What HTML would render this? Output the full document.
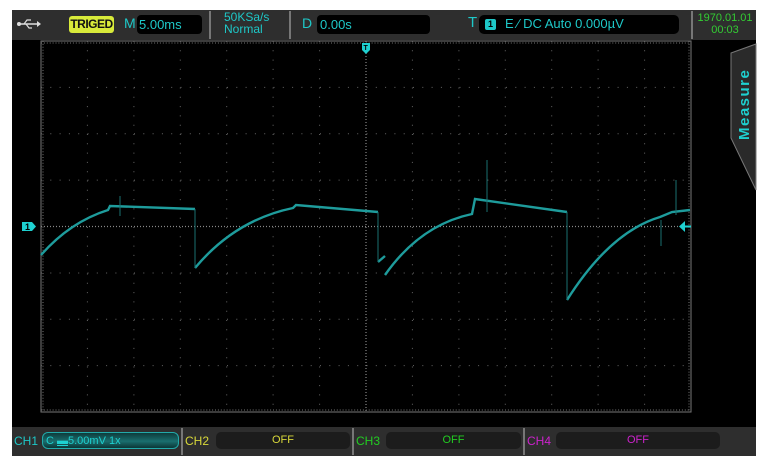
<!DOCTYPE html>
<html><head><style>
body{margin:0;background:#fff;width:772px;height:469px;overflow:hidden;font-family:"Liberation Sans",sans-serif}
.a{position:absolute}
</style></head><body>
<div class="a" style="left:12px;top:10px;width:744px;height:446px;background:#000"></div>
<div class="a" style="left:12px;top:10px;width:744px;height:30px;background:#2e2e2e"></div>
<div class="a" style="left:12px;top:427px;width:744px;height:29px;background:#2e2e2e"></div>
<svg class="a" style="left:0;top:0" width="772" height="469">
<g fill="#ddd" stroke="#ddd">
<circle cx="19" cy="24" r="2" stroke="none"/>
<line x1="19" y1="24" x2="37" y2="24" stroke-width="1.5"/>
<polygon points="37,21 41,24 37,27" stroke="none"/>
<polyline points="24,24 27,20 31,20" fill="none" stroke-width="1.2"/>
<polyline points="26,24 29,28 32,28" fill="none" stroke-width="1.2"/>
</g>
<g stroke="#777" stroke-width="2">
<line x1="210" y1="11" x2="210" y2="39"/><line x1="290" y1="11" x2="290" y2="39"/><line x1="692" y1="11" x2="692" y2="39"/>
<line x1="182" y1="428" x2="182" y2="455"/><line x1="353" y1="428" x2="353" y2="455"/><line x1="524" y1="428" x2="524" y2="455"/>
</g>
<rect x="41" y="41" width="650" height="371" fill="none" stroke="#777" stroke-width="1"/>
<g stroke="#666" stroke-width="1" stroke-dasharray="1 8.3">
<line x1="41" y1="87.4" x2="691" y2="87.4"/><line x1="41" y1="133.8" x2="691" y2="133.8"/><line x1="41" y1="180.1" x2="691" y2="180.1"/>
<line x1="41" y1="273" x2="691" y2="273"/><line x1="41" y1="319.3" x2="691" y2="319.3"/><line x1="41" y1="365.6" x2="691" y2="365.6"/>
<line x1="87.4" y1="41" x2="87.4" y2="412"/><line x1="133.9" y1="41" x2="133.9" y2="412"/><line x1="180.3" y1="41" x2="180.3" y2="412"/><line x1="226.7" y1="41" x2="226.7" y2="412"/><line x1="273.1" y1="41" x2="273.1" y2="412"/><line x1="319.6" y1="41" x2="319.6" y2="412"/>
<line x1="412.4" y1="41" x2="412.4" y2="412"/><line x1="458.9" y1="41" x2="458.9" y2="412"/><line x1="505.3" y1="41" x2="505.3" y2="412"/><line x1="551.7" y1="41" x2="551.7" y2="412"/><line x1="598.1" y1="41" x2="598.1" y2="412"/><line x1="644.6" y1="41" x2="644.6" y2="412"/>
</g>
<g stroke="#888" stroke-width="1.2" stroke-dasharray="1 2">
<line x1="41" y1="226.5" x2="691" y2="226.5"/><line x1="366" y1="41" x2="366" y2="412"/>
</g>
<g stroke="#777" stroke-width="1" stroke-dasharray="1 1.9">
<line x1="41" y1="43" x2="691" y2="43"/><line x1="41" y1="410" x2="691" y2="410"/>
<line x1="43" y1="41" x2="43" y2="412"/><line x1="689" y1="41" x2="689" y2="412"/>
</g>
<g fill="none" stroke="#1e9c9c" stroke-width="2.4">
<path d="M41,255 Q70,222 108,210 L110,206 L195,209"/>
<path d="M195,268 Q235,220 293,208 L296,205 L378,212"/>
<path d="M378,262 L385,256"/>
<path d="M385,275 Q420,225 472,214 L475,199 L567,212"/>
<path d="M567,300 Q610,232 660,217 L672,212 L690,210"/>
</g>
<g stroke="#1a7070" stroke-width="1">
<line x1="195" y1="209" x2="195" y2="268"/><line x1="378" y1="212" x2="378" y2="262"/><line x1="567" y1="212" x2="567" y2="300"/>
<line x1="487" y1="160" x2="487" y2="212"/><line x1="676" y1="180" x2="676" y2="215"/><line x1="661" y1="220" x2="661" y2="246"/>
<line x1="120" y1="196" x2="120" y2="216"/>
</g>
<path d="M22,222 h10 l4,4.5 l-4,4.5 h-10z" fill="#1ed0d0"/>
<text x="25" y="230" font-size="9" font-weight="bold" fill="#000">1</text>
<path d="M362,43 h8 v7 l-4,4 l-4,-4z" fill="#1ed0d0"/>
<text x="363.5" y="50" font-size="7" font-weight="bold" fill="#000">T</text>
<polygon points="679,226.5 685,221 685,232" fill="#1ed0d0"/><line x1="684" y1="226.5" x2="691" y2="226.5" stroke="#1ed0d0" stroke-width="2"/>
<polygon points="731,53 756,44 756,190 731,138" fill="#2a2a2a" stroke="#777" stroke-width="1"/>
<text transform="translate(749,140) rotate(-90)" font-size="15" font-weight="bold" fill="#1ed0d0" letter-spacing="1.5">Measure</text>
</svg>
<div class="a" style="left:69px;top:16px;width:45px;height:17px;background:#d8ea3a;border-radius:3px;font-size:12px;font-weight:bold;color:#111;line-height:17px;text-align:center;letter-spacing:-0.5px">TRIGED</div>
<div class="a" style="left:124px;top:15px;font-size:14px;color:#1ec8c8">M</div>
<div class="a" style="left:137px;top:15px;width:63px;height:19px;background:#000;border-radius:4px;font-size:13px;color:#1ec8c8;line-height:19px;padding-left:2px">5.00ms</div>
<div class="a" style="left:224px;top:11px;font-size:12px;color:#1ec8c8;line-height:12px">50KSa/s<br>Normal</div>
<div class="a" style="left:302px;top:15px;font-size:14px;color:#1ec8c8">D</div>
<div class="a" style="left:317px;top:15px;width:110px;height:19px;background:#000;border-radius:4px;font-size:13px;color:#1ec8c8;line-height:19px;padding-left:3px">0.00s</div>
<div class="a" style="left:468px;top:14px;font-size:15px;color:#1ec8c8">T</div>
<div class="a" style="left:479px;top:15px;width:200px;height:19px;background:#000;border-radius:5px"></div>
<div class="a" style="left:485px;top:19px;width:11px;height:11px;background:#1ec8c8;border-radius:2px;font-size:9px;font-weight:bold;color:#000;text-align:center;line-height:11px">1</div>
<div class="a" style="left:505px;top:16px;font-size:13px;color:#1ec8c8">E ∕ DC Auto 0.000µV</div>
<div class="a" style="left:694px;top:12px;width:62px;font-size:11px;color:#3c3;line-height:12px;text-align:center">1970.01.01<br>00:03</div>
<div class="a" style="left:14px;top:434px;font-size:12px;color:#1ec8c8">CH1</div>
<div class="a" style="left:42px;top:432px;width:137px;height:17px;border-radius:6px;background:linear-gradient(#0d3c3c,#1a6e6e 55%,#0b3636);border:1px solid #2aa;box-sizing:border-box;font-size:11px;color:#1ed0d0;line-height:16px;padding-left:3px">C <span style="text-decoration:underline">▬</span>5.00mV 1x</div>
<div class="a" style="left:185px;top:434px;font-size:12px;color:#d8d83a">CH2</div>
<div class="a" style="left:216px;top:432px;width:134px;height:17px;border-radius:5px;background:#1c1c1c;font-size:11px;color:#d8d83a;line-height:17px;text-align:center">OFF</div>
<div class="a" style="left:356px;top:434px;font-size:12px;color:#2c2">CH3</div>
<div class="a" style="left:386px;top:432px;width:135px;height:17px;border-radius:5px;background:#1c1c1c;font-size:11px;color:#2c2;line-height:17px;text-align:center">OFF</div>
<div class="a" style="left:527px;top:434px;font-size:12px;color:#c2c">CH4</div>
<div class="a" style="left:556px;top:432px;width:164px;height:17px;border-radius:5px;background:#1c1c1c;font-size:11px;color:#c2c;line-height:17px;text-align:center">OFF</div>
</body></html>
